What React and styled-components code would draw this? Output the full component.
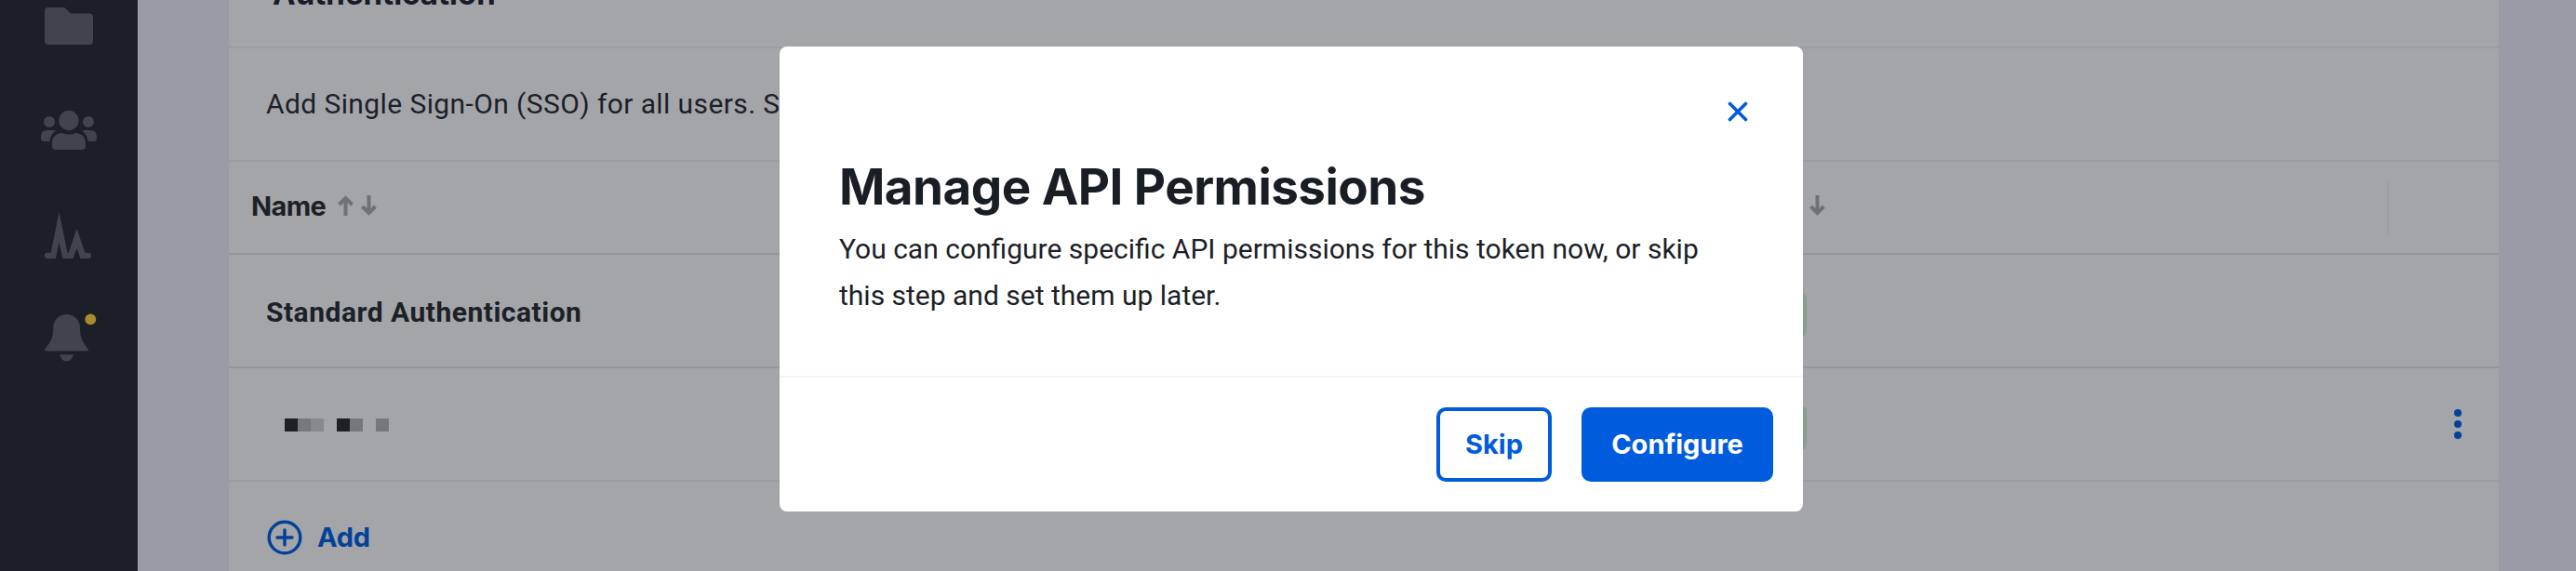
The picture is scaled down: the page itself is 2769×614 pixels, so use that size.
import React from 'react'
import styled, { createGlobalStyle } from 'styled-components'

const GlobalStyle=createGlobalStyle`
*{box-sizing:border-box;}
body{
margin:0;
overflow:hidden;
font-family:Roboto, 'Liberation Sans', sans-serif;
color:#1c1f28;
}
button{
font:inherit;
border:0;
padding:0;
background:none;
}
`
const Page=styled.div`
position:relative;
display:flex;
width:100%;
height:614px;
overflow:hidden;
background:#999ca5;
`
const Sidebar=styled.nav`
width:148px;
flex:none;
background:#1b1f27;
color:#40444f;
display:flex;
flex-direction:column;
padding:4px 0 0 36px;
gap:52px;
svg{display:block;flex:none;}
`
const Content=styled.main`
flex:1;
padding:0 83px 0 98px;
`
const Card=styled.section`
height:614px;
background:#a4a5a9;
display:flex;
flex-direction:column;
`
const Row=styled.div`
display:flex;
align-items:center;
flex:none;
height:${p=>p.$height || 122}px;
padding:0 ${p=>p.$right || 40}px 0 ${p=>p.$left || 41}px;
border-bottom:2px solid ${p=>p.$strong ? '#95969a' : '#9c9da1'};
`
const CardTitle=styled.h2`
margin:-65px 0 0 6px;
font-family:Inter, sans-serif;
font-size:33px;
font-weight:700;
line-height:40px;
color:#191b28;
`
const Description=styled.p`
margin:0 0 0 -1px;
font-size:30px;
line-height:50px;
letter-spacing:0.4px;
white-space:nowrap;
`
const ColumnName=styled.span`
width:80px;
margin-top:-3px;
font-family:Inter, sans-serif;
font-size:29px;
font-weight:700;
letter-spacing:-0.6px;
color:#1c2126;
`
const Sort=styled.span`
display:flex;
gap:8px;
margin:-4px 0 0 ${p=>p.$left}px;
`
const ColumnDivider=styled.i`
width:2px;
height:58px;
margin-left:auto;
background:#9c9da1;
`
const Cell=styled.span`
width:${p=>p.$width}px;
flex:none;
`
const RowName=styled.strong`
display:block;
margin:3px 0 0 -1px;
font-size:30px;
font-weight:700;
letter-spacing:0.5px;
line-height:50px;
color:#1c2126;
`
const Badge=styled.span`
width:100px;
height:48px;
margin-top:8px;
border-radius:6px;
background:#8a9e90;
`
const Masked=styled.div`
display:flex;
margin:2px 0 0 19px;
`
const Block=styled.i`
width:14px;
height:14px;
background:${p=>p.$tone};
`
const Menu=styled.button`
display:grid;
gap:4px;
margin-left:auto;
`
const Dot=styled.i`
width:8px;
height:8px;
border-radius:50%;
background:#034297;
`
const AddButton=styled.button`
display:flex;
align-items:center;
gap:16px;
padding:41px 0 0 41px;
color:#034297;
font-family:Inter, sans-serif;
font-size:29px;
line-height:38px;
font-weight:700;
letter-spacing:-0.3px;
`
const Overlay=styled.div`
position:absolute;
inset:0;
padding:50px 0 0 838px;
`
const Dialog=styled.div`
display:flex;
flex-direction:column;
width:1100px;
height:500px;
border-radius:8px;
background:#fff;
`
const DialogBody=styled.div`
flex:1;
padding:50px 59px 0 64px;
`
const Close=styled.button`
display:flex;
align-items:center;
margin-left:auto;
height:40px;
`
const DialogTitle=styled.h1`
margin:29px 0 0;
font-family:Inter, sans-serif;
font-size:53px;
line-height:64px;
font-weight:700;
letter-spacing:-0.55px;
color:#191e25;
white-space:nowrap;
`
const DialogText=styled.p`
margin:10px 0 0;
font-size:30px;
line-height:50px;
white-space:nowrap;
`
const DialogFooter=styled.div`
display:flex;
justify-content:flex-end;
gap:32px;
height:146px;
padding:32px;
border-top:2px solid #f4f4f5;
`
const Button=styled.button`
width:${p=>p.$width}px;
height:80px;
padding-bottom:2px;
border:4px solid #005cdc;
border-radius:10px;
font-family:Inter, sans-serif;
font-size:29px;
font-weight:700;
color:${p=>p.$primary ? '#fff' : '#005cdc'};
background:${p=>p.$primary ? '#005cdc' : '#fff'};
`

const ArrowUp=()=>(
  <svg width="17" height="22" viewBox="0 0 17 22" fill="none" stroke="#707175" strokeWidth="4">
    <path d="M8.500 22V3M1.500 10L8.500 3L15.500 10"/>
  </svg>
)
const ArrowDown=()=>(
  <svg width="17" height="22" viewBox="0 0 17 22" fill="none" stroke="#707175" strokeWidth="4">
    <path d="M8.500 0V19M1.500 12L8.500 19L15.500 12"/>
  </svg>
)

const FolderIcon=()=>(
  <svg width="76" height="52" viewBox="36 4 76 52" fill="currentColor">
    <path d="M52 8H68Q70 8 71.500 10L76 14.500H96Q100 14.500 100 18.500V44Q100 48 96 48H52Q48 48 48 44V12Q48 8 52 8Z"/>
  </svg>
)
const PeopleIcon=()=>(
  <svg width="76" height="64" viewBox="36 108 76 64" fill="currentColor">
    <circle cx="74" cy="129.500" r="10.700"/>
    <circle cx="53" cy="131" r="6"/>
    <circle cx="95" cy="131" r="6"/>
    <path d="M67 143C71 145 77 145 81 143C88 143 92 148 92 154V157Q92 161 88 161H60Q56 161 56 157V154C56 148 60 143 67 143Z"/>
    <path d="M51 140H57Q59 140 60 141C56 143 54 147 53.500 152H47Q44 152 44 149V147Q44 140 51 140Z"/>
    <path d="M97 140H91Q89 140 88 141C92 143 94 147 94.500 152H101Q104 152 104 149V147Q104 140 97 140Z"/>
  </svg>
)
const ActivityIcon=()=>(
  <svg width="76" height="60" viewBox="36 224 76 60" fill="currentColor">
    <path d="M51 271.800H54.700L63.500 228L72.500 271.800H73.800L82.500 246L91.500 271.800H95A3.100 3.100 0 0 1 95 278H86.500L82.500 267L78.500 278H67.500L63.500 260.500L59.800 278H51A3.100 3.100 0 0 1 51 271.800Z"/>
  </svg>
)
const BellIcon=()=>(
  <svg width="76" height="60" viewBox="36 336 76 60" fill="currentColor">
    <path d="M71.600 338C80 338 86 344.500 86 352C86 365 90 369 95 375.500Q95.500 377.600 93.500 377.600H49.500Q47.500 377.600 48.200 375.500C53 369 57.300 365 57.300 352C57.300 344.500 63.500 338 71.600 338Z"/>
    <path d="M64.300 381.300H79C77.500 386 75 388.500 71.600 388.500C68 388.500 65.500 386 64.300 381.300Z"/>
    <circle cx="97.300" cy="343.400" r="5.900" fill="#a88b2b"/>
  </svg>
)

const masked=['#1d2024','#77787c','#88898d','transparent','#1d2024','#77787c','transparent','#77787c']

const App = () => {
  return (
    <Page>
      <GlobalStyle/>
      <Sidebar>
        <FolderIcon/>
        <PeopleIcon/>
        <ActivityIcon/>
        <BellIcon/>
      </Sidebar>
      <Content>
        <Card>
          <Row $height={52}><CardTitle>Authentication</CardTitle></Row>
          <Row><Description>Add Single Sign-On (SSO) for all users. S</Description></Row>
          <Row $height={100} $left={24} $right={118} $strong>
            <ColumnName>Name</ColumnName>
            <Sort $left={13}><ArrowUp/><ArrowDown/></Sort>
            <Sort $left={1540}><ArrowDown/></Sort>
            <ColumnDivider/>
          </Row>
          <Row $strong>
            <Cell $width={1555}><RowName>Standard Authentication</RowName></Cell>
            <Badge/>
          </Row>
          <Row>
            <Cell $width={1555}><Masked>{masked.map((tone,i)=><Block key={i} $tone={tone}/>)}</Masked></Cell>
            <Badge/>
            <Menu><Dot/><Dot/><Dot/></Menu>
          </Row>
          <AddButton>
            <svg width="38" height="38" viewBox="0 0 38 38" fill="none" stroke="currentColor" strokeWidth="3.500">
              <circle cx="19" cy="19" r="16.800"/>
              <path d="M19 11V27M11 19H27" strokeLinecap="round"/>
            </svg>
            Add
          </AddButton>
        </Card>
      </Content>
      <Overlay>
        <Dialog>
          <DialogBody>
            <Close>
              <svg width="22" height="22" viewBox="0 0 22 22" stroke="#005cdc" strokeWidth="3.600" strokeLinecap="round"><path d="M2.500 2.500L19.500 19.500M19.500 2.500L2.500 19.500"/></svg>
            </Close>
            <DialogTitle>Manage API Permissions</DialogTitle>
            <DialogText>You can configure specific API permissions for this token now, or skip<br/>this step and set them up later.</DialogText>
          </DialogBody>
          <DialogFooter>
            <Button $width={124}>Skip</Button>
            <Button $width={206} $primary>Configure</Button>
          </DialogFooter>
        </Dialog>
      </Overlay>
    </Page>
  )
}

export default App
